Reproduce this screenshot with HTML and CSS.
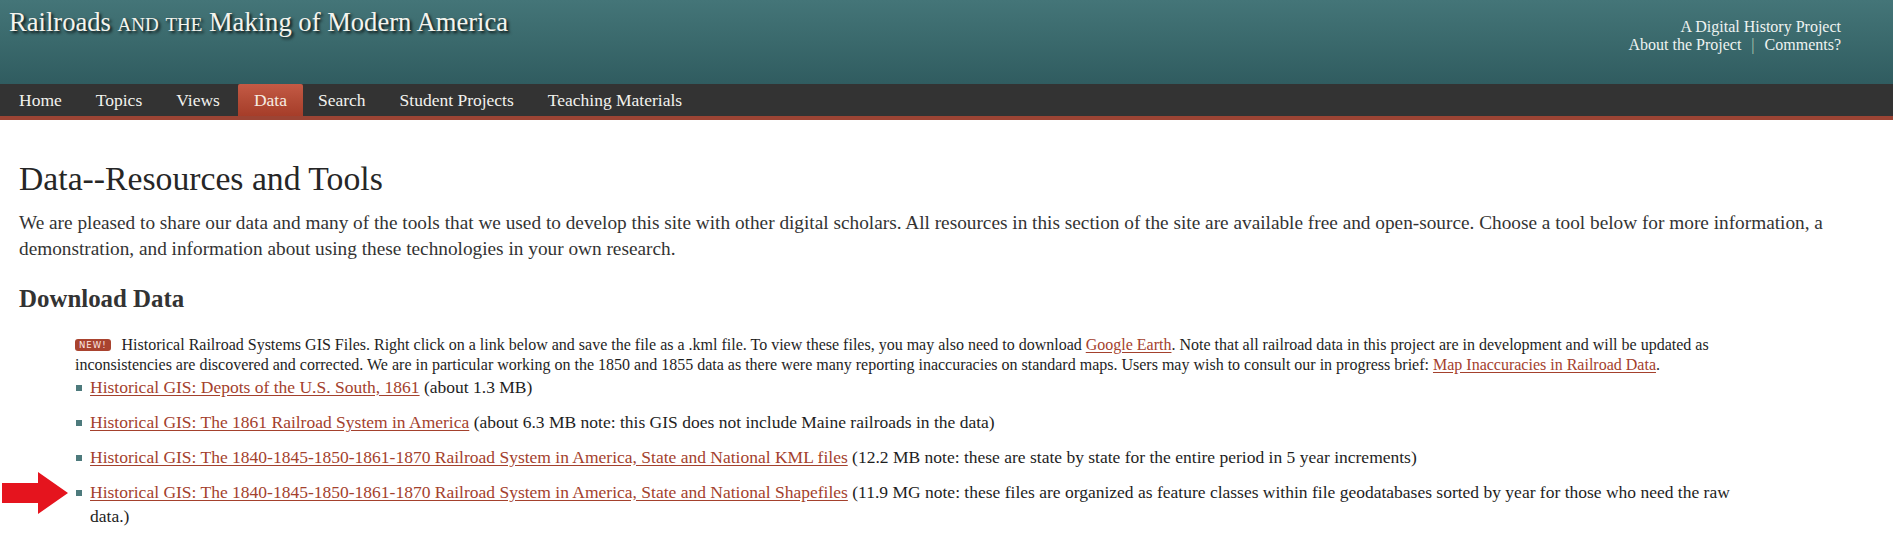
FILE: index.html
```html
<!DOCTYPE html>
<html lang="en">
<head>
<meta charset="utf-8">
<title>Data--Resources and Tools | Railroads and the Making of Modern America</title>
<link rel="stylesheet" href="styles.css">
</head>
<body>
<header class="masthead">
  <div class="site-title">Railroads <span class="sc">and the</span> Making of Modern America</div>
  <div class="tagline">
    <div class="tagline-line">A Digital History Project</div>
    <div class="tagline-line"><a href="#">About the Project</a><span class="sep">|</span><a href="#">Comments?</a></div>
  </div>
</header>
<nav class="mainnav">
  <ul class="nav-list">
    <li class="nav-item"><a href="#">Home</a></li>
    <li class="nav-item"><a href="#">Topics</a></li>
    <li class="nav-item"><a href="#">Views</a></li>
    <li class="nav-item active"><a href="#">Data</a></li>
    <li class="nav-item"><a href="#">Search</a></li>
    <li class="nav-item"><a href="#">Student Projects</a></li>
    <li class="nav-item"><a href="#">Teaching Materials</a></li>
  </ul>
</nav>
<main class="content">
  <h1 class="page-title">Data--Resources and Tools</h1>
  <p class="intro">We are pleased to share our data and many of the tools that we used to develop this site with other digital scholars. All resources in this section of the site are available free and open-source. Choose a tool below for more information, a demonstration, and information about using these technologies in your own research.</p>
  <h2 class="section-title">Download Data</h2>
  <ul class="downloads">
    <li class="notice"><span class="badge">NEW!</span>Historical Railroad Systems GIS Files. Right click on a link below and save the file as a .kml file. To view these files, you may also need to download <a href="#">Google Earth</a>. Note that all railroad data in this project are in development and will be updated as inconsistencies are discovered and corrected. We are in particular working on the 1850 and 1855 data as there were many reporting inaccuracies on standard maps. Users may wish to consult our in progress brief: <a href="#">Map Inaccuracies in Railroad Data</a>.</li>
    <li class="item"><a href="#">Historical GIS: Depots of the U.S. South, 1861</a> (about 1.3 MB)</li>
    <li class="item"><a href="#">Historical GIS: The 1861 Railroad System in America</a> (about 6.3 MB note: this GIS does not include Maine railroads in the data)</li>
    <li class="item"><a href="#">Historical GIS: The 1840-1845-1850-1861-1870 Railroad System in America, State and National KML files</a> (12.2 MB note: these are state by state for the entire period in 5 year increments)</li>
    <li class="item marked"><svg class="arrow" width="66" height="42" viewBox="0 0 66 42" aria-hidden="true"><polygon points="0,11 36,11 36,0 66,21 36,42 36,31 0,31" fill="#e5141e"/></svg><a href="#">Historical GIS: The 1840-1845-1850-1861-1870 Railroad System in America, State and National Shapefiles</a> (11.9 MG note: these files are organized as feature classes within file geodatabases sorted by year for those who need the raw data.)</li>
  </ul>
</main>
</body>
</html>
```

FILE: styles.css
```css
html, body {
  margin: 0;
  padding: 0;
  background: #fff;
}

body {
  font-family: "Liberation Serif", "Times New Roman", serif;
  color: #2a2a2a;
}

a {
  color: inherit;
  text-decoration: none;
}

/* ---------- masthead ---------- */
.masthead {
  height: 84px;
  display: flex;
  justify-content: space-between;
  align-items: flex-start;
  background: linear-gradient(to bottom, #447578 0%, #3a696c 50%, #305c60 100%);
  box-sizing: border-box;
}

.site-title {
  padding: 6px 0 0 9px;
  font-size: 26.6px;
  line-height: 32px;
  color: #f4f4ee;
  text-shadow: 2px 2px 3px rgba(0, 0, 0, 0.85);
  white-space: nowrap;
}

.sc {
  font-variant: small-caps;
}

.tagline {
  padding: 18px 52px 0 0;
  text-align: right;
  font-size: 16px;
  line-height: 18px;
  color: #eef3f1;
}

.tagline a {
  color: #eef3f1;
}

.sep {
  margin: 0 10px;
  color: #a9c7b0;
}

/* ---------- navigation ---------- */
.mainnav {
  background: #333333;
  border-bottom: 4px solid #9c4434;
}

.nav-list {
  display: flex;
  margin: 0;
  padding: 0 0 0 3px;
  list-style: none;
}

.nav-item {
  margin-right: 2px;
}

.nav-item.active {
  margin-right: -1px;
}

.nav-item a {
  display: block;
  padding: 0 16px;
  height: 32px;
  line-height: 32px;
  font-size: 17.5px;
  color: #f2f2ee;
}

.nav-item.active a {
  background: linear-gradient(to bottom, #c45a45 0%, #b24a35 55%, #a63d29 100%);
  border-radius: 2px 2px 0 0;
  color: #f6ece2;
}

/* ---------- content ---------- */
.content {
  padding: 0 19px 20px;
}

.page-title {
  margin: 40px 0 0;
  font-size: 33.7px;
  line-height: 38px;
  font-weight: normal;
  color: #262626;
}

.intro {
  margin: 12px 0 0;
  font-size: 19.3px;
  line-height: 26px;
  color: #333;
}

.section-title {
  margin: 23px 0 0;
  font-size: 24.9px;
  line-height: 28px;
  font-weight: bold;
  color: #333;
}

.downloads {
  list-style: none;
  margin: 22px 0 0 56px;
  padding: 0;
  width: 1675px;
  font-size: 17.5px;
  color: #1e1e1e;
}

.downloads a {
  color: #a4412d;
  text-decoration: underline;
  text-underline-offset: 2px;
}

.notice {
  font-size: 16px;
  line-height: 20px;
}

.badge {
  display: inline-block;
  vertical-align: 2px;
  margin-right: 11px;
  padding: 0 4px;
  height: 12px;
  line-height: 12px;
  border-radius: 3px;
  background: #a9432f;
  color: #fbe9e4;
  font-family: "DejaVu Sans", "Liberation Sans", sans-serif;
  font-size: 8.5px;
  letter-spacing: 1px;
}

.item {
  position: relative;
  padding-left: 15px;
  line-height: 24px;
  margin-bottom: 11px;
}

.item:first-of-type {
  margin-bottom: 10px;
}

.item::before {
  content: "";
  position: absolute;
  left: 1px;
  top: 10px;
  width: 6px;
  height: 6px;
  background: #4d7a7c;
}

.arrow {
  position: absolute;
  left: -73px;
  top: -8px;
}
```
